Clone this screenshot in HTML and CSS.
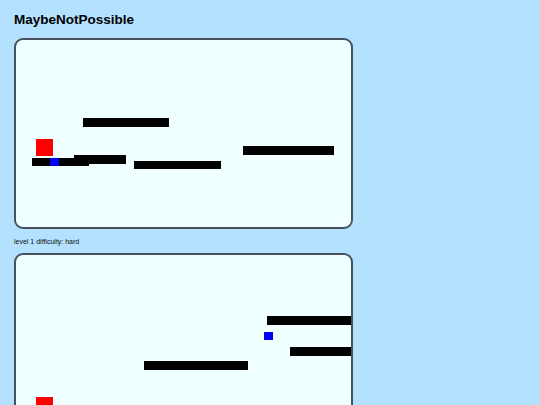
FILE: index.html
```html
<!DOCTYPE html>
<html>
<head>
<meta charset="utf-8">
<link rel="stylesheet" href="styles.css">
</head>
<body>
<h1 class="title">MaybeNotPossible</h1>
<div class="level">
  <div class="board">
    <div class="plat" style="left:67px;top:78px;width:86px;height:9px"></div>
    <div class="plat" style="left:16px;top:118px;width:57px;height:8px"></div>
    <div class="plat" style="left:58px;top:115px;width:52px;height:9px"></div>
    <div class="plat" style="left:118px;top:121px;width:87px;height:8px"></div>
    <div class="plat" style="left:227px;top:106px;width:91px;height:9px"></div>
    <div class="goal" style="left:34px;top:118px"></div>
    <div class="player" style="left:20px;top:99px"></div>
  </div>
  <p class="caption">level 1 difficulty: hard</p>
</div>
<div class="level">
  <div class="board">
    <div class="plat" style="left:251px;top:61px;width:100px;height:9px"></div>
    <div class="plat" style="left:274px;top:92px;width:100px;height:9px"></div>
    <div class="plat" style="left:128px;top:106px;width:104px;height:9px"></div>
    <div class="goal" style="left:248px;top:77px"></div>
    <div class="player" style="left:20px;top:142px"></div>
  </div>
</div>
</body>
</html>
```
FILE: styles.css
```css
html, body {
  margin: 0;
  padding: 0;
}
body {
  background: #b3e1fe;
  font-family: "Liberation Sans", Arial, sans-serif;
  color: #000;
  padding: 0 14px;
  overflow: hidden;
  height: 405px;
}
.title {
  font-size: 13.5px;
  font-weight: bold;
  line-height: 16px;
  margin: 0;
  padding-top: 12px;
  padding-bottom: 10px;
}
.board {
  position: relative;
  width: 335px;
  height: 187px;
  background: #f0ffff;
  border: 2px solid #48525c;
  border-radius: 9px;
  overflow: hidden;
}
.plat {
  position: absolute;
  background: #000;
}
.player {
  position: absolute;
  width: 17px;
  height: 17px;
  background: #ff0000;
}
.goal {
  position: absolute;
  width: 9px;
  height: 8px;
  background: #0000ff;
}
.caption {
  font-size: 7px;
  line-height: 9px;
  margin: 0;
  padding-top: 8px;
  padding-bottom: 7px;
  color: #111;
}
```
